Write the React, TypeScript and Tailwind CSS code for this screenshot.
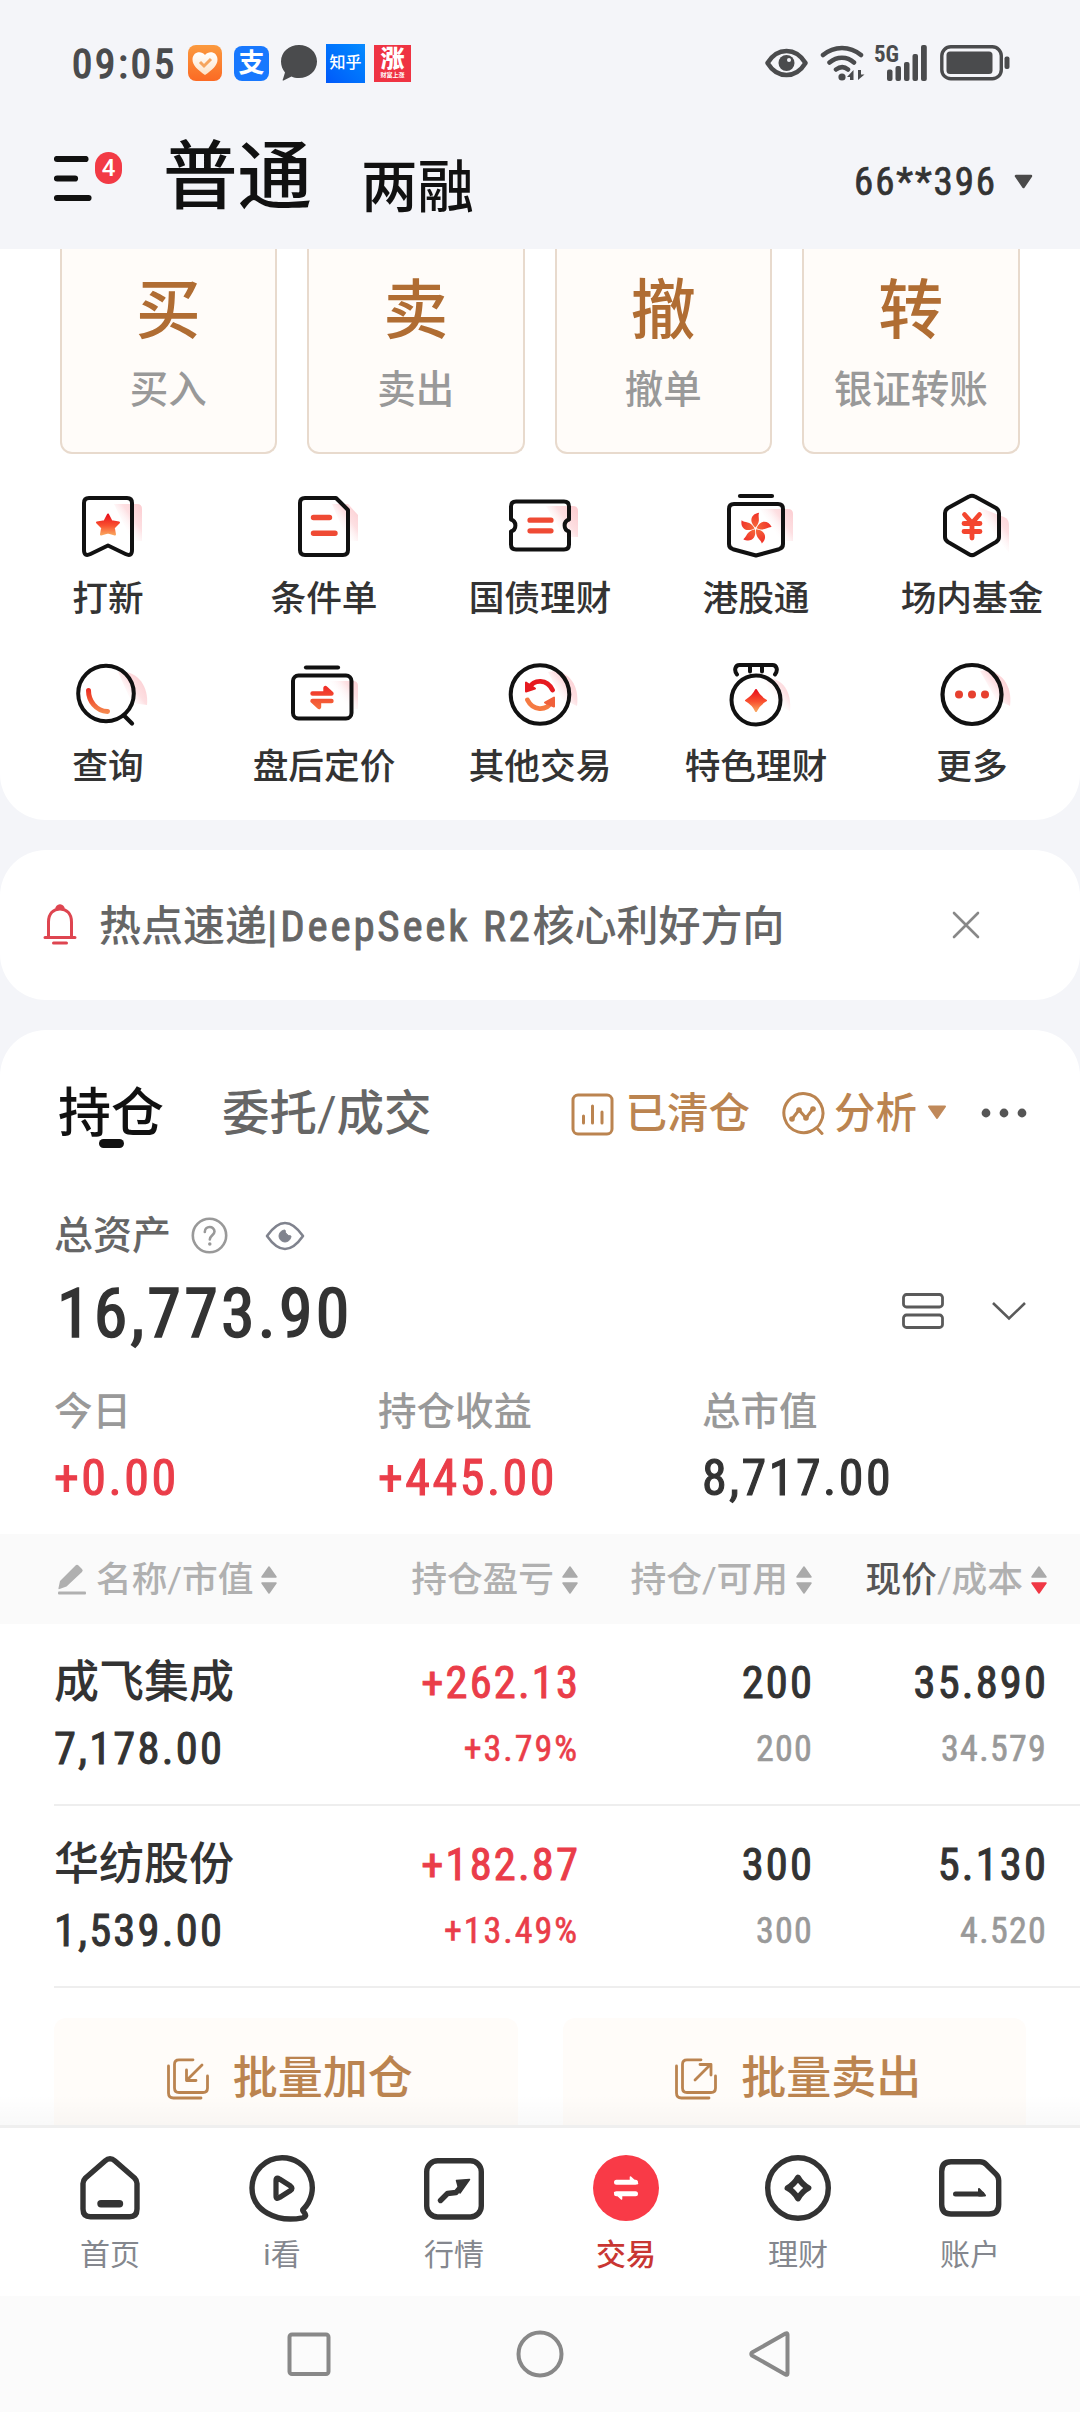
import type { ReactNode } from "react";

const QuickIcon = ({ children }: { children: ReactNode }) => (
  <svg width="72" height="72" viewBox="0 0 72 72" fill="none" strokeLinecap="round" strokeLinejoin="round" className="block overflow-visible">
    {children}
  </svg>
);

const InkColor = "#111111";

const Defs = () => (
  <svg width="0" height="0" className="absolute">
    <defs>
      <linearGradient id="fire" x1="0" y1="0" x2="0" y2="1">
        <stop offset="0" stopColor="#e8101c" />
        <stop offset="0.55" stopColor="#f9502f" />
        <stop offset="1" stopColor="#f9a25c" />
      </linearGradient>
      <linearGradient id="fireSoft" x1="0" y1="0" x2="0" y2="1">
        <stop offset="0" stopColor="#f03028" />
        <stop offset="1" stopColor="#f5693a" />
      </linearGradient>
      <linearGradient id="fireArc" gradientUnits="userSpaceOnUse" x1="20" y1="22" x2="20" y2="54">
        <stop offset="0" stopColor="#e8101c" />
        <stop offset="0.5" stopColor="#ee4a2c" />
        <stop offset="1" stopColor="#f58a50" />
      </linearGradient>
      <linearGradient id="blush" gradientUnits="userSpaceOnUse" x1="74" y1="20" x2="50" y2="38">
        <stop offset="0" stopColor="#fccdd1" />
        <stop offset="0.5" stopColor="#fddcdf" stopOpacity="0.9" />
        <stop offset="1" stopColor="#ffffff" stopOpacity="0" />
      </linearGradient>
      <linearGradient id="orange" x1="0" y1="0" x2="0" y2="1">
        <stop offset="0" stopColor="#fb9a3f" />
        <stop offset="1" stopColor="#fb6a24" />
      </linearGradient>
      <linearGradient id="cream" x1="0" y1="0" x2="0" y2="1">
        <stop offset="0" stopColor="#ffffff" />
        <stop offset="1" stopColor="#fde3c8" />
      </linearGradient>
    </defs>
  </svg>
);

const SquareBlush = () => <path d="M42 13H65Q70 13 70 18V50H60Z" fill="url(#blush)" />;
const RoundBlush = () => <path d="M44 13C62 9 76 24 73 47L58 40Z" fill="url(#blush)" />;

const quickItems: { label: string; icon: ReactNode }[] = [
  {
    label: "打新",
    icon: (
      <QuickIcon>
        <SquareBlush />
        <path d="M17 7H55Q60 7 60 12V59Q60 66 53.500 63L36 54.500L18.500 63Q12 66 12 59V12Q12 7 17 7Z" stroke={InkColor} strokeWidth="4" />
        <path d="M36 23.500L39.500 30.200L47 31.500L41.800 36.800L43 43.500L36 41.500L29 43.500L30.200 36.800L25 31.500L32.500 30.200Z" fill="url(#fire)" stroke="url(#fire)" strokeWidth="2" />
      </QuickIcon>
    ),
  },
  {
    label: "条件单",
    icon: (
      <QuickIcon>
        <path d="M44 13H60L70 24V50H60Z" fill="url(#blush)" />
        <path d="M17 7H48L60 19V59Q60 64 55 64H17Q12 64 12 59V12Q12 7 17 7Z" stroke={InkColor} strokeWidth="4" />
        <path d="M25.500 26.500H41.500M25.500 42.200H47" stroke="#ef4a34" strokeWidth="5.400" />
      </QuickIcon>
    ),
  },
  {
    label: "国债理财",
    icon: (
      <QuickIcon>
        <path d="M42 15H69Q74 15 74 20V46H60Z" fill="url(#blush)" />
        <path d="M12 10.500H60Q65 10.500 65 15.500V28.500A6.300 6.300 0 0 0 65 40.500V53.500Q65 58.500 60 58.500H12Q7 58.500 7 53.500V40.500A6.300 6.300 0 0 0 7 28.500V15.500Q7 10.500 12 10.500Z" stroke={InkColor} strokeWidth="4" />
        <path d="M26 29.200H47M26 39.800H47" stroke="#ef4a34" strokeWidth="5.200" />
      </QuickIcon>
    ),
  },
  {
    label: "港股通",
    icon: (
      <QuickIcon>
        <path d="M40 18H68Q73 18 73 23V50H60Z" fill="url(#blush)" />
        <path d="M20 5H52" stroke={InkColor} strokeWidth="4.200" />
        <path d="M14 13H58Q63 13 63 18V53Q63 57 59 58.200L36 64.500L13 58.200Q9 57 9 53V18Q9 13 14 13Z" stroke={InkColor} strokeWidth="4" />
        {[4, 76, 148, 220, 292].map((a) => (
          <path key={a} transform={`rotate(${a} 35.500 37.500)`} d="M35.500 36.500C28 31 30 23 38 21.500C36.500 26 41 29 35.500 36.500Z" fill="url(#fireSoft)" />
        ))}
      </QuickIcon>
    ),
  },
  {
    label: "场内基金",
    icon: (
      <QuickIcon>
        <path d="M42 16L68 26Q73 28 73 34V62L60 46Z" fill="url(#blush)" />
        <path d="M33 5.600Q36 3.800 39 5.600L60 17Q63 19 63 22V46Q63 49 60 51L39 63.200Q36 65 33 63.200L12 51Q9 49 9 46V22Q9 19 12 17Z" stroke={InkColor} strokeWidth="4" />
        <path d="M28.500 23.500L36 32L43.500 23.500M28 32.500H44M28 40.500H44M36 32V47" stroke="#f4462f" strokeWidth="4.800" />
      </QuickIcon>
    ),
  },
  {
    label: "查询",
    icon: (
      <QuickIcon>
        <path d="M46 13C64 10 77 26 75 46L60 44Z" fill="url(#blush)" />
        <circle cx="34" cy="34.500" r="27.800" stroke={InkColor} strokeWidth="4" />
        <path d="M52.500 57L60 64.500" stroke={InkColor} strokeWidth="4.200" />
        <path d="M16.500 31.500C16.500 42 24 52 35.500 52.500" stroke="url(#fireArc)" strokeWidth="5" />
      </QuickIcon>
    ),
  },
  {
    label: "盘后定价",
    icon: (
      <QuickIcon>
        <path d="M30 22H65Q70 22 70 27V50H60Z" fill="url(#blush)" />
        <path d="M18 8.500H50" stroke={InkColor} strokeWidth="4.200" />
        <rect x="5" y="16.500" width="58.500" height="43" rx="5.500" stroke={InkColor} strokeWidth="4" />
        <path d="M24.500 34.500H43.500L37.500 29V34M43.500 42H24.500L31 48V42.500" stroke="url(#fireSoft)" strokeWidth="4.400" />
      </QuickIcon>
    ),
  },
  {
    label: "其他交易",
    icon: (
      <QuickIcon>
        <RoundBlush />
        <circle cx="36" cy="35.500" r="29.300" stroke={InkColor} strokeWidth="4" />
        <path d="M25 29C30 20 43 19.500 48.500 31" stroke="#e61a20" strokeWidth="4.800" />
        <path d="M22 23.500V32.500L31 29.500Z" fill="#e61a20" stroke="#e61a20" strokeWidth="2" />
        <path d="M23.500 41C29 52 42 52 47 43.500" stroke="#f57a42" strokeWidth="4.800" />
        <path d="M50 38.500V47.500L41 43.500Z" fill="#f0603a" stroke="#f0603a" strokeWidth="2" />
      </QuickIcon>
    ),
  },
  {
    label: "特色理财",
    icon: (
      <QuickIcon>
        <path d="M44 20C60 17 72 30 70 52L56 46Z" fill="url(#blush)" />
        <path d="M17 15.500C13.500 11 15.500 6 19.500 6H52.500C56.500 6 58.500 11 55 15.500M30 7V12.500M42 7V12.500" stroke={InkColor} strokeWidth="4" />
        <circle cx="36" cy="41" r="24.500" stroke={InkColor} strokeWidth="4" />
        <path d="M36 31Q39 37.500 46 41.500Q39 45.500 36 52Q33 45.500 26 41.500Q33 37.500 36 31Z" fill="url(#fire)" stroke="url(#fire)" strokeWidth="2" />
      </QuickIcon>
    ),
  },
  {
    label: "更多",
    icon: (
      <QuickIcon>
        <path d="M44 12C62 9 77 24 74 47L60 40Z" fill="url(#blush)" />
        <circle cx="36" cy="35.500" r="29.500" stroke={InkColor} strokeWidth="4.200" />
        <circle cx="23" cy="35.500" r="4" fill="#e6402f" />
        <circle cx="36" cy="35.500" r="4" fill="#e6402f" />
        <circle cx="49" cy="35.500" r="4" fill="#e6402f" />
      </QuickIcon>
    ),
  },
];

const actions = [
  { big: "买", label: "买入" },
  { big: "卖", label: "卖出" },
  { big: "撤", label: "撤单" },
  { big: "转", label: "银证转账" },
];

const holdings = [
  { name: "成飞集成", value: "7,178.00", pnl: "+262.13", pct: "+3.79%", qty: "200", avail: "200", price: "35.890", cost: "34.579" },
  { name: "华纺股份", value: "1,539.00", pnl: "+182.87", pct: "+13.49%", qty: "300", avail: "300", price: "5.130", cost: "4.520" },
];

const navItems: { label: string; active?: boolean; icon: ReactNode }[] = [
  {
    label: "首页",
    icon: (
      <g>
        <path d="M31 9Q36 4.500 41 9L60.500 26Q63 28.500 63 31.500V57Q63 64.800 55.500 64.800H16.500Q9 64.800 9 57V31.500Q9 28.500 11.500 26Z" strokeWidth="5.400" />
        <path d="M27 51.700H45.500" strokeWidth="7.400" />
      </g>
    ),
  },
  {
    label: "i看",
    icon: (
      <g>
        <path d="M57 57.500A30 30 0 0 0 36 5.800A30.200 30.200 0 0 0 6 36C6 58 30 71 56.500 65.800Q61.500 64.500 58.500 61Q56 58.500 57 57.500Z" strokeWidth="5.400" />
        <path d="M30 28.500Q30 24.500 33.500 27L44.500 34Q47.500 36.200 44.500 38.500L33.500 45.500Q30 48 30 44Z" strokeWidth="5.200" />
      </g>
    ),
  },
  {
    label: "行情",
    icon: (
      <g>
        <rect x="8.700" y="8.800" width="54.600" height="56.200" rx="11" strokeWidth="5.400" />
        <path d="M22.500 48.500L29.500 41.500L38 40.500L44 33.500" strokeWidth="5.400" />
        <path d="M38.500 28.500L51.500 27.500L42 41Z" fill="#333333" strokeWidth="1.500" />
      </g>
    ),
  },
  {
    label: "交易",
    active: true,
    icon: (
      <g>
        <circle cx="36" cy="36" r="33" fill="#f93a47" stroke="none" />
        <path d="M26.500 30.200H45.500M26.500 41.700H45.500" stroke="#ffffff" strokeWidth="5" />
        <path d="M40.500 29V25L47.500 31.500ZM31.500 43V47L24.700 40.500Z" fill="#ffffff" stroke="#ffffff" strokeWidth="1.600" />
      </g>
    ),
  },
  {
    label: "理财",
    icon: (
      <g>
        <circle cx="36" cy="36" r="30.300" strokeWidth="5.400" />
        <path d="M36 25.500Q40 32.500 46.500 36Q40 39.500 36 46.500Q32 39.500 25.500 36Q32 32.500 36 25.500Z" strokeWidth="5.800" />
      </g>
    ),
  },
  {
    label: "账户",
    icon: (
      <g>
        <path d="M17 9.800H46Q49.500 9.800 52 12.200L62 22.200Q64.700 25 64.700 28.500V52.500Q64.700 62 55 62H17Q7.700 62 7.700 52.500V19.500Q7.700 9.800 17 9.800Z" strokeWidth="5.400" />
        <path d="M21.500 42H48" strokeWidth="5" />
        <path d="M45 37V43.500H51Z" fill="#333333" strokeWidth="2" />
      </g>
    ),
  },
];

const Sorter = ({ down }: { down?: boolean }) => (
  <svg width="16" height="30" viewBox="0 0 16 30" className="ml-[8px] block shrink-0" strokeLinejoin="round" strokeWidth="1.500">
    <path d="M8 2L15 12H1Z" fill="#aaaaaa" stroke="#aaaaaa" />
    <path d="M8 28L15 18H1Z" fill={down ? "#f03845" : "#aaaaaa"} stroke={down ? "#f03845" : "#aaaaaa"} />
  </svg>
);

const StatusBar = () => (
  <div className="flex h-[126px] shrink-0 items-center text-[#4a4b4d]">
    <span className="ml-[72px] w-[116px] pt-[2px] text-[41px] leading-[48px] font-normal tracking-[0.070em] [-webkit-text-stroke:1.4px] [font-stretch:75%]">09:05</span>
    <svg width="34" height="36" viewBox="0 0 34 36">
      <rect width="34" height="36" rx="8" fill="url(#orange)" />
      <path d="M17 30C10 25 4.500 20.500 4.500 14.500C4.500 7 13 5 17 10C21 5 29.500 7 29.500 14.500C29.500 20.500 24 25 17 30Z" fill="url(#cream)" />
      <path d="M12 17L16 21L23 14" fill="none" stroke="#f5a55e" strokeWidth="3" />
    </svg>
    <span className="relative ml-[12px] flex h-[35px] w-[35px] items-center justify-center rounded-[8px] bg-[#1878fe] text-[26px] leading-[30px] font-bold text-white">
      支
    </span>
    <svg width="36" height="36" viewBox="0 0 36 36" className="ml-[12px]" fill="#4a4b4d">
      <path d="M18 0C28 0 36 7 36 16.500S28 33 18 33C15 33 12.500 32.500 10.500 31.500L2.500 35.500C1.500 36 1.500 35 2 34L4 27.500C1.500 24.500 0 20.500 0 16.500C0 7 8 0 18 0Z" />
    </svg>
    <span className="ml-[9px] flex h-[39px] w-[39px] items-center justify-center bg-linear-to-tr from-[#0058fa] to-[#0a8bff] text-[16px] leading-[20px] font-medium text-white">知乎</span>
    <span className="ml-[9px] flex h-[37px] w-[37px] flex-col items-center justify-center bg-[#ef3343] text-white">
      <span className="text-[24px] leading-[24px] font-black">涨</span>
      <span className="text-[6px] leading-[8px] font-bold">财富上涨</span>
    </span>
    <svg width="43" height="30" viewBox="0 0 43 30" fill="none" className="ml-[354px]">
      <path d="M2.500 15C8 6 14 3 21.500 3S35 6 40.500 15C35 24 29 27 21.500 27S8 24 2.500 15Z" stroke="#4a4b4d" strokeWidth="4.500" strokeLinejoin="round" />
      <circle cx="21.500" cy="15" r="8" fill="#4a4b4d" />
      <circle cx="24" cy="12" r="2" fill="#f4f5f9" />
    </svg>
    <svg width="46" height="36" viewBox="0 0 46 36" fill="none" className="ml-[12px]" stroke="#4a4b4d" strokeWidth="4.500" strokeLinecap="round">
      <path d="M3 10C14 0.500 30 0.500 41 10M9.500 17.500C17 11 27 11 34 17.500M16 24.500C20 21.500 24.500 21.500 28 24.500" />
      <circle cx="22" cy="32" r="3.600" fill="#4a4b4d" stroke="none" />
      <path d="M33.500 35V25L27 32H30V35ZM38 25V35L44.500 29.500H41V25Z" fill="#4a4b4d" stroke="none" />
    </svg>
    <div className="ml-[8px] flex h-[36px] items-start">
      <span className="w-[13px] text-[23px] leading-[20px] font-bold [font-stretch:75%]">5G</span>
      <svg width="41" height="36" viewBox="13 0 41 36" fill="#4a4b4d">
        <rect x="13" y="24.500" width="5.500" height="11.500" rx="2" />
        <rect x="21.500" y="21" width="5.500" height="15" rx="2" />
        <rect x="30" y="17" width="5.500" height="19" rx="2" />
        <rect x="38.500" y="9" width="5.500" height="27" rx="2" />
        <rect x="47" y="0" width="5.800" height="36" rx="2" />
      </svg>
    </div>
    <svg width="70" height="36" viewBox="0 0 70 36" fill="none" className="ml-[12px]">
      <rect x="1.800" y="1.800" width="59.500" height="32" rx="9" stroke="#4a4b4d" strokeWidth="3.400" />
      <rect x="6.500" y="6.500" width="46" height="22.500" rx="3.500" fill="#4a4b4d" />
      <rect x="64.500" y="11.500" width="5" height="12.500" rx="2" fill="#4a4b4d" />
    </svg>
  </div>
);

const Header = () => (
  <div className="flex h-[123px] shrink-0 items-start text-[#111111]">
    <svg width="38" height="45" viewBox="0 0 38 45" className="mt-[30px] ml-[54px]" stroke="#111111" strokeWidth="6.200" strokeLinecap="round">
      <path d="M3 3H31.500M3 22.500H21M3 42H34.500" />
    </svg>
    <span className="mt-[26px] ml-[3px] flex h-[32px] w-[27px] items-center justify-center rounded-full bg-[#f23a45] text-[24px] leading-[32px] font-medium text-white">4</span>
    <span className="mt-[12px] ml-[41px] text-[74.500px] leading-[80px] font-medium">普通</span>
    <span className="mt-[32px] ml-[49px] text-[56.500px] leading-[60px] font-medium">两融</span>
    <span className="mt-[32px] mr-[17px] ml-auto text-[39px] leading-[48px] font-normal tracking-[0.048em] text-[#333333] [-webkit-text-stroke:0.7px] [font-stretch:75%]">66**396</span>
    <svg width="19" height="15" viewBox="0 0 19 15" className="mt-[48px] mr-[47px]">
      <path d="M2 2H17L9.500 13Z" fill="#4a4a4a" stroke="#4a4a4a" strokeWidth="2.500" strokeLinejoin="round" />
    </svg>
  </div>
);

const QuickPanel = () => (
  <section className="h-[571px] shrink-0 rounded-b-[46px] bg-white">
    <div className="grid grid-cols-4 gap-[30px] pr-[60.500px] pl-[59.500px]">
      {actions.map((a) => (
        <div key={a.big} className="flex h-[205px] flex-col items-center rounded-b-[12px] border-2 border-t-0 border-[#e8dacd] bg-[#fffcf9]">
          <span className="mt-[22px] text-[65px] leading-[80px] font-medium text-[#b06d33]">{a.big}</span>
          <span className="mt-[14px] text-[38.500px] leading-[50px] text-[#999999]">{a.label}</span>
        </div>
      ))}
    </div>
    <div className="mt-[37px] grid grid-cols-5">
      {quickItems.map((q) => (
        <div key={q.label} className="flex h-[168px] flex-col items-center">
          {q.icon}
          <span className="mt-[13px] text-[35.700px] leading-[46px] text-[#333333]">{q.label}</span>
        </div>
      ))}
    </div>
  </section>
);

const Notice = () => (
  <section className="mt-[30px] flex h-[150px] shrink-0 items-center rounded-[46px] bg-white">
    <svg width="34" height="42" viewBox="0 0 34 42" fill="none" stroke="#de4550" strokeWidth="3" strokeLinejoin="round" strokeLinecap="round" className="ml-[43px]">
      <path d="M2 33.500H32M5.500 33V18C5.500 9.500 10.500 5 17 5S28.500 9.500 28.500 18V33M13.500 5.500Q14 2 17 1.800Q20 2 20.500 5.500M10.500 39H23.500" />
    </svg>
    <span className="ml-[22px] pt-[3px] text-[42px] leading-[54px] text-[#666666]">
      热点速递<span className="tracking-[3px] [-webkit-text-stroke:0.8px]">|</span>
      <span className="font-normal tracking-[0.064em] [-webkit-text-stroke:0.9px] [font-stretch:75%] text-[43px]">DeepSeek R2</span>核心利好方向
    </span>
    <svg width="28" height="28" viewBox="0 0 28 28" className="mr-[100px] ml-auto" stroke="#888888" strokeWidth="2.600" strokeLinecap="round">
      <path d="M2 2L26 26M26 2L2 26" />
    </svg>
  </section>
);

const HoldingTabs = () => (
  <div className="flex h-[168px] items-center">
    <span className="relative ml-[58px] text-[53px] leading-[64px] font-medium text-[#111111]">
      持仓
      <span className="absolute top-[57px] left-[41px] h-[9px] w-[25px] rounded-full bg-[#111111]" />
    </span>
    <span className="ml-[58px] text-[47.500px] leading-[60px] text-[#666666]">委托/成交</span>
    <div className="ml-auto flex items-center text-[41.500px] leading-[52px] text-[#bb8450]">
      <svg width="43" height="43" viewBox="0 0 43 43" fill="none" stroke="#bb8450" strokeWidth="3" strokeLinecap="round">
        <rect x="2" y="2" width="39" height="39" rx="5" />
        <path d="M12.500 23V30M21.500 13V30M31 19V30" />
      </svg>
      <span className="ml-[11px]">已清仓</span>
      <svg width="44" height="44" viewBox="0 0 44 44" fill="none" stroke="#bb8450" strokeWidth="3" strokeLinecap="round" strokeLinejoin="round" className="ml-[31px]">
        <path d="M35 36A19.500 19.500 0 1 1 39.500 30.500Q38 34 35.500 35.500L41 41.500" />
        <path d="M11 27L18 18L25 26L32 17" />
        <g fill="#bb8450" stroke="none">
          <circle cx="11" cy="27" r="2.800" />
          <circle cx="18" cy="18" r="2.800" />
          <circle cx="25" cy="26" r="2.800" />
          <circle cx="32" cy="17" r="2.800" />
        </g>
      </svg>
      <span className="ml-[9px]">分析</span>
      <svg width="20" height="15" viewBox="0 0 20 15" className="mb-[3px] ml-[10px]">
        <path d="M2 1.500H18L10 13Z" fill="#c0895a" stroke="#c0895a" strokeWidth="2" strokeLinejoin="round" />
      </svg>
    </div>
    <svg width="46" height="10" viewBox="0 0 46 10" className="mr-[53px] mb-[2px] ml-[34px]" fill="#555555">
      <circle cx="5" cy="5" r="4.400" />
      <circle cx="23" cy="5" r="4.400" />
      <circle cx="41" cy="5" r="4.400" />
    </svg>
  </div>
);

const summary = [
  { label: "今日", value: "+0.00", red: true },
  { label: "持仓收益", value: "+445.00", red: true },
  { label: "总市值", value: "8,717.00", red: false },
];

const Assets = () => (
  <div className="h-[336px] pt-[12px]">
    <div className="flex h-[52px] items-center pl-[54px]">
      <span className="text-[39px] leading-[52px] text-[#666666]">总资产</span>
      <svg width="37" height="37" viewBox="0 0 37 37" fill="none" stroke="#999999" strokeWidth="2.600" className="mb-[2px] ml-[20px]" strokeLinecap="round">
        <circle cx="18.500" cy="18.500" r="16.700" />
        <path d="M13.800 15C13.800 8.500 23.500 8.500 23.500 14.500C23.500 18 18.800 18.500 18.800 22.500" />
        <circle cx="18.800" cy="27" r="1" fill="#999999" strokeWidth="1.500" />
      </svg>
      <svg width="40" height="30" viewBox="0 0 40 30" fill="none" className="ml-[37px]">
        <path d="M2 15C9 5 14 2 20 2S31 5 38 15C31 25 26 28 20 28S9 25 2 15Z" stroke="#80838e" strokeWidth="2.600" strokeLinejoin="round" />
        <path d="M20 9A6 6 0 1 0 26 15A6 6 0 0 1 20 9Z" fill="#80838e" stroke="#80838e" strokeWidth="1" />
      </svg>
    </div>
    <div className="mt-[10px] flex h-[80px] items-center pl-[57px]">
      <span className="pt-[3px] text-[68px] leading-[80px] font-normal tracking-[0.048em] text-[#333333] [-webkit-text-stroke:1.600px] [font-stretch:75%]">16,773.90</span>
      <svg width="42" height="36" viewBox="0 0 42 36" fill="none" stroke="#5a5a5a" strokeWidth="2.800" className="mb-[2px] ml-auto">
        <rect x="1.500" y="1.500" width="39" height="12.500" rx="3" />
        <rect x="1.500" y="22" width="39" height="12.500" rx="3" />
      </svg>
      <svg width="34" height="20" viewBox="0 0 34 20" fill="none" stroke="#5a5a5a" strokeWidth="2.600" className="mr-[54px] mb-[2px] ml-[48px]">
        <path d="M1 2L17 17.500L33 2" />
      </svg>
    </div>
    <div className="mt-[35px] grid grid-cols-[324px_324px_1fr] pl-[54px]">
      {summary.map((s) => (
        <div key={s.label} className="flex flex-col">
          <span className="text-[38.500px] leading-[50px] text-[#999999]">{s.label}</span>
          <span className={`mt-[11px] text-[50px] leading-[60px] font-normal tracking-[0.050em] [-webkit-text-stroke:1.100px] [font-stretch:75%] ${s.red ? "text-[#ea3d49]" : "text-[#333333]"}`}>{s.value}</span>
        </div>
      ))}
    </div>
  </div>
);

const TableHeader = () => (
  <div className="flex h-[90px] items-center bg-[#fafafa] pt-[1px] text-[35.700px] leading-[46px] text-[#b0b0b0]">
    <div className="flex w-[344px] items-center pl-[58px]">
      <svg width="28" height="31" viewBox="0 0 28 31" fill="#b0b0b0">
        <path d="M0.500 24L2 17L17.500 1.500Q19 0 20.500 1.500L24 5Q25.500 6.500 24 8L8.500 22.500L1.500 25Q0 25.500 0.500 24Z" />
        <rect x="0" y="27.500" width="28" height="3" rx="1" />
      </svg>
      <span className="ml-[10px]">名称/市值</span>
      <Sorter />
    </div>
    <div className="flex w-[234px] items-center justify-end">
      <span>持仓盈亏</span>
      <Sorter />
    </div>
    <div className="flex w-[234px] items-center justify-end">
      <span>持仓/可用</span>
      <Sorter />
    </div>
    <div className="flex w-[235px] items-center justify-end">
      <span>
        <span className="text-[#555555]">现价</span>/成本
      </span>
      <Sorter down />
    </div>
  </div>
);

const NumberPair = ({ top, bottom, red }: { top: string; bottom: string; red?: boolean }) => (
  <div className={`flex w-[234px] flex-col items-end ${red ? "text-[#ea3d49]" : "text-[#333333]"}`}>
    <span className="-mr-[2px] h-[66px] tracking-[0.048em] [-webkit-text-stroke:1px]">{top}</span>
    <span className={`-mr-[1px] text-[36px] [-webkit-text-stroke:0.6px] ${red ? "tracking-[0.055em]" : "tracking-[0.035em] text-[#999999]"}`}>{bottom}</span>
  </div>
);

const HoldingRow = ({ h }: { h: (typeof holdings)[number] }) => (
  <div className="ml-[54px] flex h-[182px] border-b-2 border-[#eeeeee] pt-[27px] text-[44.500px] leading-[64px] font-normal text-[#333333] [font-stretch:75%]">
    <div className="flex w-[290px] flex-col">
      <span className="h-[66px] text-[45px] font-[450]">{h.name}</span>
      <span className="tracking-[0.050em] [-webkit-text-stroke:1px]">{h.value}</span>
    </div>
    <NumberPair top={h.pnl} bottom={h.pct} red />
    <NumberPair top={h.qty} bottom={h.avail} />
    <NumberPair top={h.price} bottom={h.cost} />
  </div>
);

const BatchButton = ({ label, arrow }: { label: string; arrow: string }) => (
  <div className="flex h-[120px] flex-1 items-center justify-center rounded-[12px] bg-[#fffcf9] pt-[1px] pl-[8px] text-[45px] leading-[56px] text-[#bb8450]">
    <svg width="42" height="42" viewBox="0 0 42 42" fill="none" stroke="#bb8450" strokeWidth="2.800" strokeLinecap="round" strokeLinejoin="round">
      <path d="M26 1.800H12Q7.500 1.800 7.500 6.300V30Q7.500 34.500 12 34.500H36Q40.500 34.500 40.500 30V18" />
      <path d="M1.500 8V35Q1.500 40 6.500 40H34" />
      <path d={arrow} />
    </svg>
    <span className="ml-[24px]">{label}</span>
  </div>
);

const BottomNav = () => (
  <nav className="flex h-[171px] shrink-0 border-t-[3px] border-[#efefef] bg-white px-[24px] font-normal">
    {navItems.map((n) => (
      <div key={n.label} className="flex flex-1 flex-col items-center pt-[24px]">
        <svg width="72" height="72" viewBox="0 0 72 72" fill="none" stroke="#333333" strokeLinecap="round" strokeLinejoin="round">
          {n.icon}
        </svg>
        <span className={n.active ? "mt-[11px] text-[30px] leading-[40px] font-medium text-[#c93632]" : "mt-[11px] text-[30px] leading-[40px] text-[#84878e]"}>{n.label}</span>
      </div>
    ))}
  </nav>
);

const SystemNav = () => (
  <div className="flex h-[116px] shrink-0 items-center bg-[#fbfbfb] pl-[286px]">
    <svg width="46" height="48" viewBox="0 0 46 48" fill="none" stroke="#888888" strokeWidth="4">
      <rect x="3.500" y="4.500" width="39" height="39.500" rx="2.500" />
    </svg>
    <svg width="48" height="48" viewBox="0 0 48 48" fill="none" stroke="#888888" strokeWidth="4" className="ml-[184px]">
      <circle cx="24" cy="24" r="21.500" />
    </svg>
    <svg width="44" height="48" viewBox="0 0 44 48" fill="none" stroke="#888888" strokeWidth="4" strokeLinejoin="round" className="ml-[183px]">
      <path d="M38.500 3.500Q40.500 2.500 40.500 4.500V43.500Q40.500 45.500 38.500 44.500L5 25.500Q3.500 24 5 22.500Z" />
    </svg>
  </div>
);

export default function App() {
  return (
    <div className="relative flex h-[2412px] w-[1080px] flex-col overflow-hidden bg-[#f4f5f9] font-['Roboto','Noto_Sans_CJK_SC',sans-serif] font-[450] whitespace-nowrap" lang="zh-CN">
      <Defs />
      <StatusBar />
      <Header />
      <main className="relative flex h-[1876px] shrink-0 flex-col overflow-hidden">
        <QuickPanel />
        <Notice />
        <section className="mt-[30px] h-[1100px] shrink-0 rounded-t-[46px] bg-white">
          <HoldingTabs />
          <Assets />
          <TableHeader />
          {holdings.map((h) => (
            <HoldingRow key={h.name} h={h} />
          ))}
          <div className="mt-[30px] flex gap-[45px] px-[54px]">
            <BatchButton label="批量加仓" arrow="M35 7L20 22M19.500 12V22.500H29" />
            <BatchButton label="批量卖出" arrow="M20 22L35 7M25 6.500H36V17" />
          </div>
        </section>
        <div className="absolute inset-x-0 bottom-0 h-[30px] bg-linear-to-b from-transparent to-black/[0.025]" />
      </main>
      <BottomNav />
      <SystemNav />
    </div>
  );
}
